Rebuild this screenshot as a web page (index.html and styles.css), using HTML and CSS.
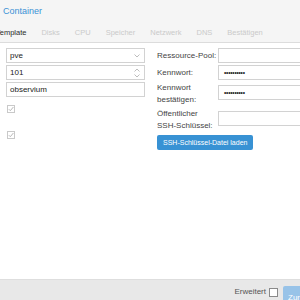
FILE: index.html
```html
<!DOCTYPE html>
<html lang="de">
<head>
    <meta charset="UTF-8">
    <title>Container</title>
    <link rel="stylesheet" href="styles.css">
</head>
<body>
    <div class="window">
        <div class="title">Container</div>

        <div class="tabs">
            <span class="tab active">Template</span>
            <span class="tab">Disks</span>
            <span class="tab">CPU</span>
            <span class="tab">Speicher</span>
            <span class="tab">Netzwerk</span>
            <span class="tab">DNS</span>
            <span class="tab">Bestätigen</span>
        </div>

        <div class="panel">
            <div class="col-left">
                <div class="field">
                    <span class="value">pve</span>
                    <svg class="trigger" width="6" height="4" viewBox="0 0 6 4"><path d="M0.5 0.5 L3 3 L5.5 0.5" fill="none" stroke="#b5b5b5" stroke-width="0.9"/></svg>
                </div>
                <div class="field">
                    <span class="value">101</span>
                    <svg class="trigger" width="6" height="10" viewBox="0 0 6 10"><path d="M0.5 3.5 L3 1 L5.5 3.5 M0.5 6.5 L3 9 L5.5 6.5" fill="none" stroke="#b5b5b5" stroke-width="0.9"/></svg>
                </div>
                <div class="field">
                    <span class="value">observium</span>
                </div>
                <div class="check first">
                    <svg width="8" height="8" viewBox="0 0 8 8"><rect x="0.5" y="0.5" width="7" height="7" fill="#fff" stroke="#c9c9c9"/><path d="M1.8 4.2 L3.3 5.7 L6.4 2" fill="none" stroke="#b0b0b0" stroke-width="0.9"/></svg>
                </div>
                <div class="check second">
                    <svg width="8" height="8" viewBox="0 0 8 8"><rect x="0.5" y="0.5" width="7" height="7" fill="#fff" stroke="#c9c9c9"/><path d="M1.8 4.2 L3.3 5.7 L6.4 2" fill="none" stroke="#b0b0b0" stroke-width="0.9"/></svg>
                </div>
            </div>

            <div class="col-right">
                <div class="row">
                    <label class="label">Ressource-Pool:</label>
                    <div class="field wide"></div>
                </div>
                <div class="row">
                    <label class="label">Kennwort:</label>
                    <div class="field wide"><span class="dots">••••••••••</span></div>
                </div>
                <div class="row tall">
                    <label class="label">Kennwort<br>bestätigen:</label>
                    <div class="field wide"><span class="dots">••••••••••</span></div>
                </div>
                <div class="row tall">
                    <label class="label">Öffentlicher<br>SSH-Schlüssel:</label>
                    <div class="field wide"></div>
                </div>
                <button class="btn">SSH-Schlüssel-Datei laden</button>
            </div>
        </div>

        <div class="footer">
            <span class="adv-label">Erweitert</span>
            <span class="adv-box"></span>
            <button class="btn back">Zurück</button>
        </div>
    </div>
</body>
</html>
```

FILE: styles.css
```css
body {
    margin: 0;
    background: #fff;
    font-family: "Liberation Sans", Arial, sans-serif;
    overflow: hidden;
}

.window {
    width: 300px;
    height: 300px;
    display: flex;
    flex-direction: column;
    overflow: hidden;
    background: #f5f5f5;
}

.title {
    height: 22px;
    line-height: 22px;
    padding-left: 3px;
    font-size: 9px;
    color: #3c92d6;
}

.tabs {
    height: 20px;
    display: flex;
    gap: 15px;
    align-items: center;
    margin-left: -4px;
    font-size: 7.5px;
    border-bottom: 1px solid #dcdcdc;
    white-space: nowrap;
}

.tab {
    color: #cacaca;
}

.tab.active {
    color: #2b2b2b;
}

.panel {
    flex: 1;
    min-height: 0;
    background: #fff;
    display: flex;
    gap: 12px;
    padding: 5px 0 0 6px;
    font-size: 8px;
    color: #333;
}

.col-left {
    width: 139px;
    flex: none;
    display: flex;
    flex-direction: column;
    gap: 2px;
}

.field {
    height: 15px;
    box-sizing: border-box;
    border: 1px solid #d2d2d2;
    background: #fff;
    display: flex;
    align-items: center;
    padding: 0 4px 0 3px;
    color: #222;
}

.value {
    flex: 1;
}

.check {
    height: 8px;
    padding-left: 1px;
}

.check.first {
    margin-top: 6px;
}

.check.second {
    margin-top: 16px;
}

.col-right {
    flex: 1;
    min-width: 0;
    display: flex;
    flex-direction: column;
    gap: 2px;
}

.row {
    display: flex;
    align-items: flex-start;
}

.label {
    width: 61px;
    flex: none;
    line-height: 12px;
    padding-top: 2px;
    color: #444;
    white-space: nowrap;
}

.row.tall .label {
    padding-top: 0;
}

.row.tall .field {
    margin-top: 3px;
}

.wide {
    width: 110px;
    flex: none;
}

.dots {
    font-size: 6.5px;
    letter-spacing: -0.2px;
    padding-left: 2px;
    color: #222;
}

.btn {
    align-self: flex-start;
    margin-top: 1px;
    height: 15px;
    padding: 0 6px;
    border: none;
    border-radius: 2px;
    background: #3892d4;
    color: #fff;
    font-family: "Liberation Sans", Arial, sans-serif;
    font-size: 7px;
    line-height: 15px;
    white-space: nowrap;
}

.footer {
    height: 21px;
    box-sizing: border-box;
    flex: none;
    background: #e8e8e8;
    border-top: 1px solid #dedede;
    display: flex;
    align-items: flex-start;
    justify-content: flex-end;
    padding-top: 6px;
    font-size: 8px;
    color: #555;
}

.adv-label {
    line-height: 12px;
}

.adv-box {
    width: 9px;
    height: 9px;
    box-sizing: border-box;
    border: 1px solid #8a8a8a;
    background: #fff;
    margin: 2px 0 0 3px;
}

.btn.back {
    margin: 0 -35px 0 5px;
    width: 52px;
    height: 22px;
    background: #98c3e8;
    font-size: 8px;
    text-align: left;
    padding-left: 5px;
}
```
